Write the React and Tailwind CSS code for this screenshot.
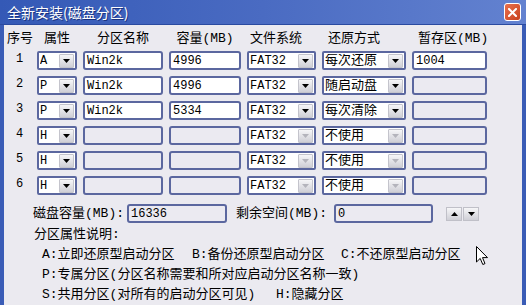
import React from "react";

const mono = "font-['Liberation_Mono','Noto_Sans_CJK_SC',monospace]";

const rows = [
  { n: 1, attr: "A", name: "Win2k", cap: "4996", fat: "FAT32", mode: "每次还原", tmp: "1004", on: true, tmpOn: true },
  { n: 2, attr: "P", name: "Win2k", cap: "4996", fat: "FAT32", mode: "随启动盘", tmp: "", on: true },
  { n: 3, attr: "P", name: "Win2k", cap: "5334", fat: "FAT32", mode: "每次清除", tmp: "", on: true },
  { n: 4, attr: "H", name: "", cap: "", fat: "FAT32", mode: "不使用", tmp: "" },
  { n: 5, attr: "H", name: "", cap: "", fat: "FAT32", mode: "不使用", tmp: "" },
  { n: 6, attr: "H", name: "", cap: "", fat: "FAT32", mode: "不使用", tmp: "" },
];

const Arrow = ({ up, off }) => (
  <svg width="7" height="4" viewBox="0 0 7 4">
    <path d={up ? "M0 4h7L3.5 0z" : "M0 0h7L3.5 4z"} fill={off ? "#b4b4bc" : "#000"} />
  </svg>
);

const Combo = ({ value, off, small }) => (
  <div className="flex h-[19px] items-center rounded-[2px] border-2 border-[#5b679f] bg-white pl-[1px] pr-[1px]">
    <span className={`flex-1 truncate text-black ${small ? "text-[12px]" : "text-[13px]"} leading-none`}>
      {value}
    </span>
    <span className="flex h-[14px] w-[15px] items-center justify-center rounded-[1px] border border-[#c4c4cc] bg-gradient-to-b from-[#f6f6f8] to-[#cfcfd6]">
      <Arrow off={off} />
    </span>
  </div>
);

const Box = ({ value, on }) => (
  <div
    className={`flex h-[19px] items-center rounded-[3px] border-2 border-[#5b679f] pl-[2px] text-[12px] leading-none text-black ${
      on ? "bg-white" : "bg-[#ebeaf1]"
    }`}
  >
    {value}
  </div>
);

const cols = "grid grid-cols-[27px_40px_80px_72px_69px_84px_75px] gap-x-[6px]";

export default function App() {
  return (
    <div className={`relative flex h-[305px] w-[526px] flex-col overflow-hidden bg-[#ebeaf0] ${mono}`}>
      {/* title bar */}
      <div className="flex h-[28px] items-center justify-between border-b border-[#2a4aa0] bg-gradient-to-r from-[#3459b6] via-[#4a6bc2] to-[#6382d0] pl-[7px] pr-[5px]">
        <span className="font-['Noto_Sans_CJK_SC',sans-serif] text-[14px] leading-none text-white [text-shadow:1px_1px_0_#1a3380]">
          全新安装(磁盘分区)
        </span>
        <span className="flex h-[18px] w-[17px] items-center justify-center rounded-[3px] border border-white bg-gradient-to-br from-[#e8704c] to-[#c8411c]">
          <svg width="9" height="9" viewBox="0 0 9 9">
            <path d="M1 1L8 8M8 1L1 8" stroke="#fff" strokeWidth="2" strokeLinecap="square" />
          </svg>
        </span>
      </div>

      {/* body */}
      <div className="flex flex-1 flex-col border-x-4 border-[#3a5cb6]">
        <div className={`${cols} mt-[4px] h-[18px] items-center whitespace-nowrap text-[13px] leading-none text-black`}>
          <span className="pl-[3px]">序号</span>
          <span className="text-center">属性</span>
          <span className="text-center">分区名称</span>
          <span className="text-center">容量(MB)</span>
          <span className="pl-[3px]">文件系统</span>
          <span className="pl-[6px]">还原方式</span>
          <span className="pl-[6px]">暂存区(MB)</span>
        </div>

        <div className={`${cols} mt-[4px] gap-y-[6px]`}>
          {rows.map((r) => (
            <React.Fragment key={r.n}>
              <span className="-mt-[3px] flex items-center justify-center pl-[4px] text-[12px] text-black">{r.n}</span>
              <Combo value={r.attr} small />
              <Box value={r.name} on={r.on} />
              <Box value={r.cap} on={r.on} />
              <Combo value={r.fat} off={!r.on} small />
              <Combo value={r.mode} off={!r.on} />
              <Box value={r.tmp} on={r.tmpOn} />
            </React.Fragment>
          ))}
        </div>

        <div className="mt-[9px] flex h-[19px] items-center pl-[29px] text-[13px] leading-none text-black">
          <span className="w-[94px] whitespace-nowrap">磁盘容量(MB):</span>
          <div className="w-[100px]">
            <Box value="16336" />
          </div>
          <span className="ml-[9px] w-[98px] whitespace-nowrap">剩余空间(MB):</span>
          <div className="w-[99px]">
            <Box value="0" />
          </div>
          <div className="ml-[13px] flex h-[14px] gap-[1px]">
            <span className="flex w-[16px] items-center justify-center border border-[#c0c0c8] bg-gradient-to-b from-[#f6f6f8] to-[#cfcfd6]">
              <Arrow up />
            </span>
            <span className="flex w-[16px] items-center justify-center border border-[#c0c0c8] bg-gradient-to-b from-[#f6f6f8] to-[#cfcfd6]">
              <Arrow />
            </span>
          </div>
        </div>

        <div className="mt-[2px] flex flex-col text-[13px] leading-[20px] text-black">
          <span className="pl-[30px]">分区属性说明:</span>
          <div className="flex pl-[38px] whitespace-nowrap">
            <span className="w-[150px]">A:立即还原型启动分区</span>
            <span className="w-[149px]">B:备份还原型启动分区</span>
            <span>C:不还原型启动分区</span>
          </div>
          <span className="pl-[38px] whitespace-nowrap">P:专属分区(分区名称需要和所对应启动分区名称一致)</span>
          <div className="flex pl-[38px] whitespace-nowrap">
            <span className="w-[234px]">S:共用分区(对所有的启动分区可见)</span>
            <span>H:隐藏分区</span>
          </div>
        </div>
      </div>

      {/* mouse pointer */}
      <svg className="absolute left-[476px] top-[246px]" width="13" height="20" viewBox="0 0 13 20">
        <path
          d="M0.5 0.5L0.5 16L4.2 12.4L6.8 18.5L9 17.6L6.5 11.6L11.5 11.6Z"
          fill="#fff"
          stroke="#000"
          strokeWidth="1"
          strokeLinejoin="round"
        />
      </svg>
    </div>
  );
}
